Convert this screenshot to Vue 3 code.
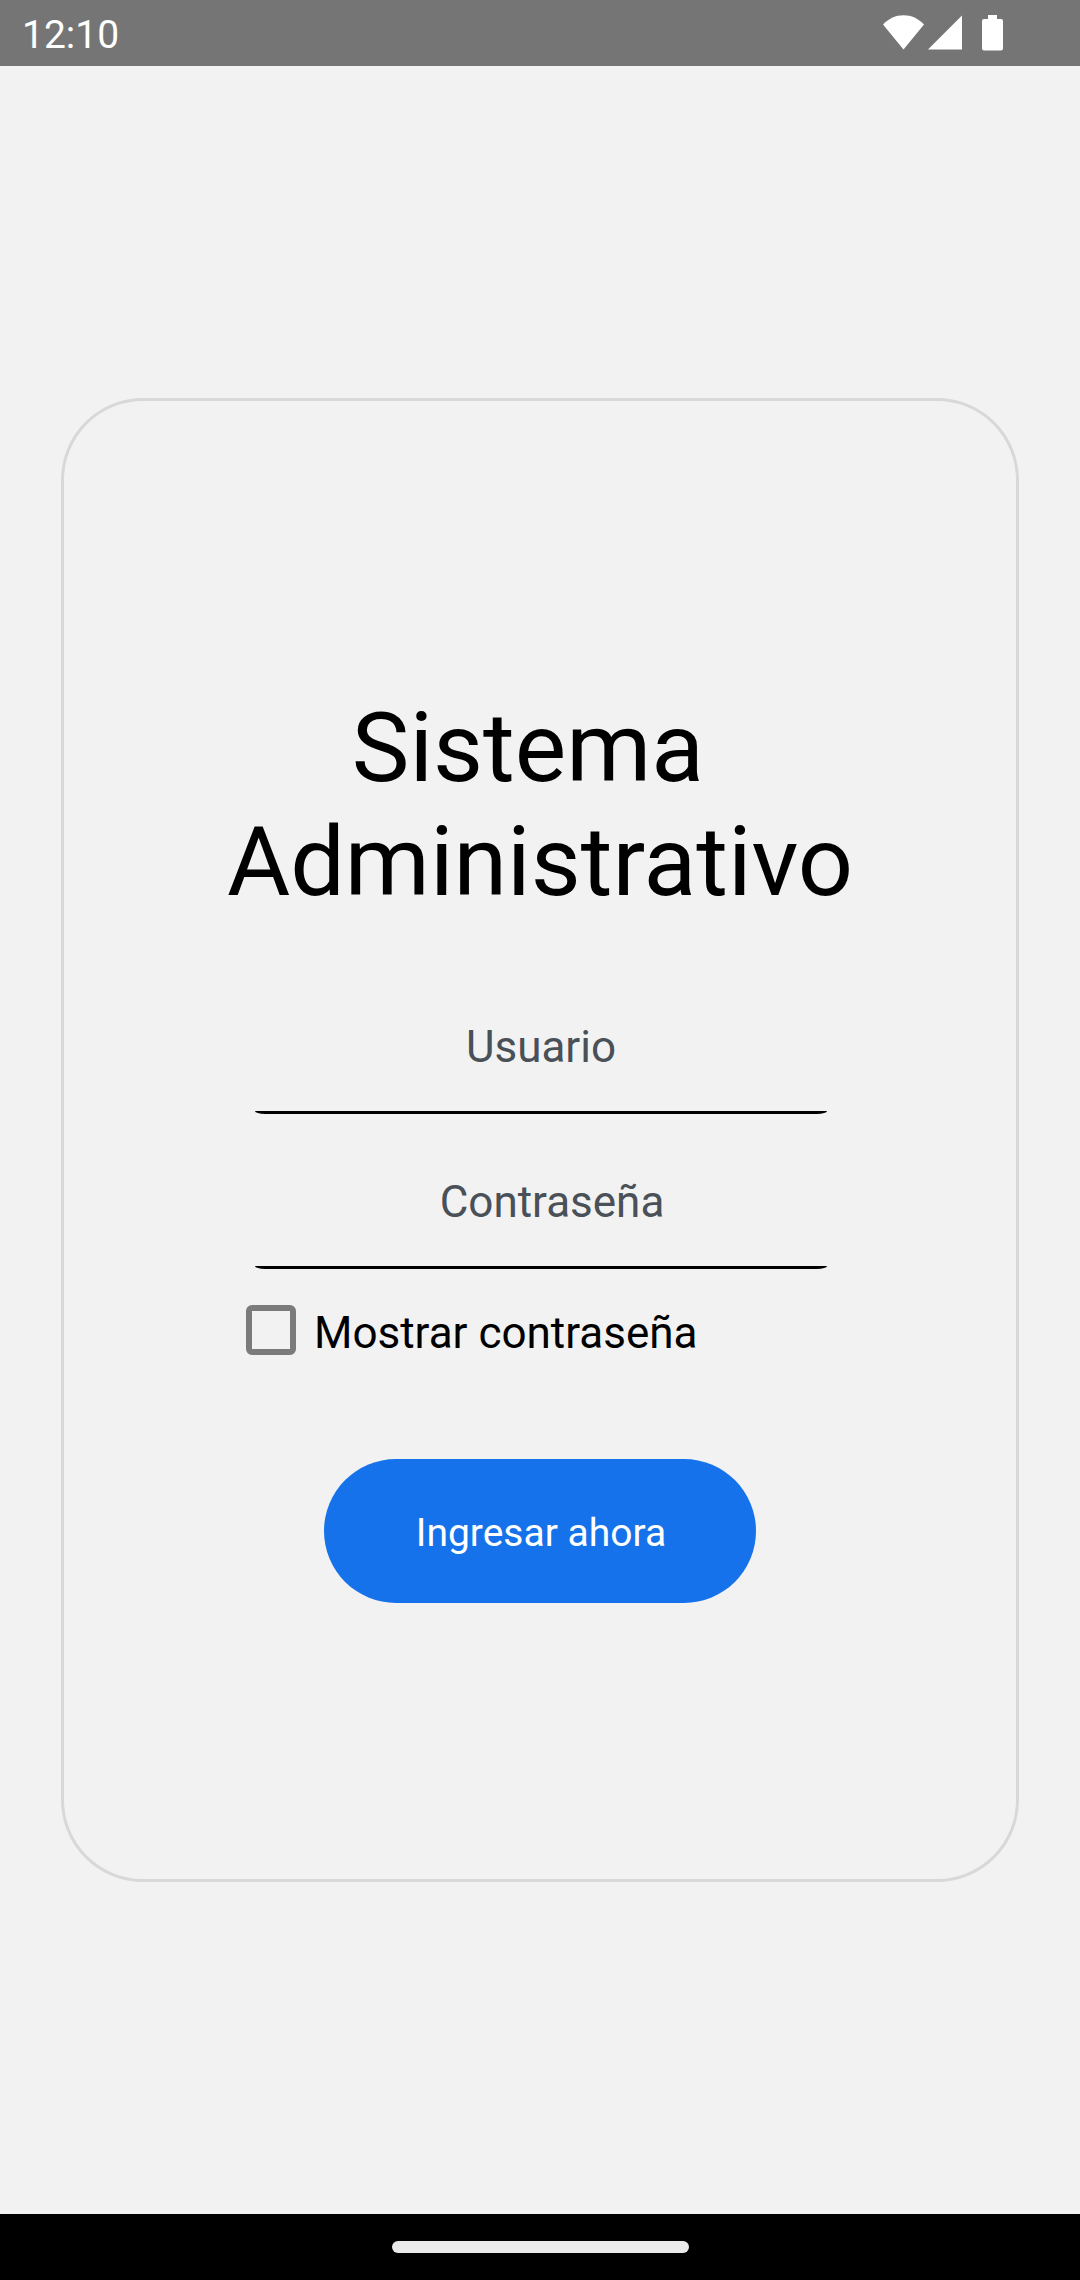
<script setup>
import { ref } from 'vue'

const user = ref('')
const password = ref('')
const showPassword = ref(false)
</script>

<template>
  <div class="screen">
    <header class="status-bar">
      <time class="clock">12:10</time>
      <div class="status-icons">
        <svg class="wifi" width="42" height="36" viewBox="0 0 42 36" aria-hidden="true">
          <path d="M0 9.500C6 3.500 12.500 0.300 20.500 0.300S35 3.500 41 9.500L20.500 34.500Z" fill="#fff" />
        </svg>
        <svg class="signal" width="35" height="36" viewBox="0 0 35 36" aria-hidden="true">
          <path d="M34 0.500V34.500H0Z" fill="#fff" />
        </svg>
        <svg width="21" height="36" viewBox="0 0 21 36" aria-hidden="true">
          <path d="M6 0H15V4H19Q21 4 21 6V33.500Q21 35.500 19 35.500H2Q0 35.500 0 33.500V6Q0 4 2 4H6Z" fill="#fff" />
        </svg>
      </div>
    </header>

    <main class="content">
      <section class="card">
        <h1 class="title">Sistema&nbsp;<br />Administrativo</h1>
        <form class="form" @submit.prevent>
          <div class="field">
            <input v-model="user" type="text" placeholder="Usuario" aria-label="Usuario" />
          </div>
          <div class="field">
            <input
              v-model="password"
              class="password"
              :type="showPassword ? 'text' : 'password'"
              placeholder="Contraseña"
              aria-label="Contraseña"
            />
          </div>
          <div class="toggle">
            <input id="show-password" v-model="showPassword" type="checkbox" />
            <label for="show-password">Mostrar contraseña</label>
          </div>
          <button class="submit" type="submit">Ingresar ahora</button>
        </form>
      </section>
    </main>

    <footer class="nav-bar">
      <div class="home-handle"></div>
    </footer>
  </div>
</template>

<style>
body {
  background: #f2f2f2;
}
</style>

<style scoped>
.screen {
  display: flex;
  flex-direction: column;
  min-height: 100vh;
  background: #f2f2f2;
  color: #000;
  font-family: Roboto, sans-serif;
}

.status-bar {
  display: flex;
  align-items: center;
  justify-content: space-between;
  box-sizing: border-box;
  height: 66px;
  padding: 0 77px 0 22px;
  background: #757575;
  color: #fff;
}

.clock {
  font-size: 39px;
  line-height: 46px;
  padding-top: 4px;
}

.status-icons {
  display: flex;
}

.wifi {
  margin-right: 3px;
}

.signal {
  margin-right: 19px;
}

.content {
  flex: 1;
  display: flex;
  align-items: center;
  padding: 24px 61px;
}

.card {
  flex: 1;
  display: flex;
  flex-direction: column;
  align-items: center;
  padding: 290px 40px 276px;
  border: 3px solid #d8d8d8;
  border-radius: 82px;
}

.title {
  margin: 0 0 64px;
  font-size: 97px;
  line-height: 114px;
  font-weight: 400;
  text-align: center;
}

.form {
  display: flex;
  flex-direction: column;
  width: 100%;
  max-width: 588px;
}

.field {
  margin: 0 7px 24px 9px;
}

.field::after {
  content: '';
  display: block;
  height: 3px;
  background: #000;
  border-radius: 0 0 10px 10px / 0 0 3px 3px;
}

.field input {
  display: block;
  box-sizing: border-box;
  width: 100%;
  height: 128px;
  padding: 0;
  border: 0;
  outline: 0;
  background: transparent;
  color: #000;
  font: 400 44px Roboto, sans-serif;
  text-align: center;
}

.field .password {
  padding-left: 22px;
}

.field input::placeholder {
  color: #495057;
  opacity: 1;
}

.toggle {
  display: flex;
  align-items: flex-start;
  gap: 18px;
  margin-top: 12px;
}

.toggle input {
  appearance: none;
  box-sizing: border-box;
  flex: none;
  width: 50px;
  height: 50px;
  margin: 0;
  border: 6px solid #7b7b7b;
  border-radius: 6px;
}

.toggle input:checked {
  background: #1672ea;
  border-color: #1672ea;
}

.toggle label {
  font-size: 44px;
  line-height: 56px;
}

.submit {
  align-self: center;
  width: 432px;
  height: 144px;
  margin-top: 98px;
  padding: 4px 0 0 2px;
  border: 0;
  border-radius: 72px;
  background: #1672ea;
  color: #fff;
  font: 400 39px Roboto, sans-serif;
}

.nav-bar {
  display: flex;
  align-items: center;
  justify-content: center;
  height: 66px;
  background: #000;
}

.home-handle {
  width: 297px;
  height: 12px;
  border-radius: 6px;
  background: #ebebeb;
}
</style>
